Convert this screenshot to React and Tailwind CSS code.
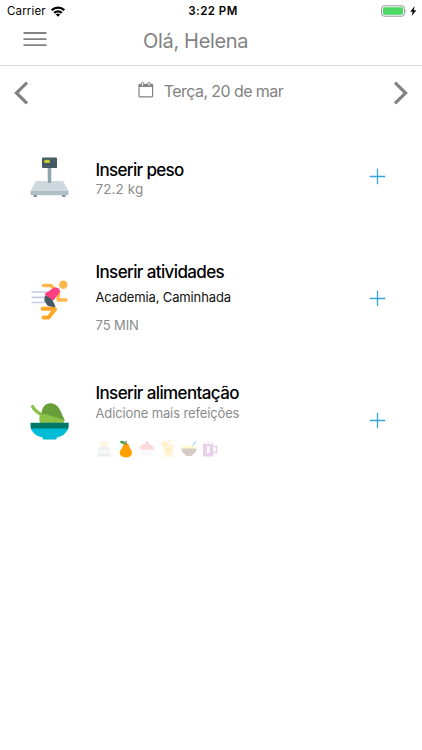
import React from "react";

function StatusBar() {
  return (
    <div className="flex h-[22px] items-center text-black">
      <div className="flex flex-1 items-center pl-[7px]">
        <span className="text-[11.5px] leading-[22px] tracking-[0.15px]">Carrier</span>
        <svg className="ml-[5px] h-[11px] w-[14px]" viewBox="0 0 14 11" fill="none" stroke="#000" strokeWidth="2.3">
          <path d="M0.8 4.2a8.8 8.8 0 0 1 12.4 0M3.2 6.9a5.4 5.4 0 0 1 7.6 0" />
          <path d="M7 10.8 4.8 8.6a3 3 0 0 1 4.4 0z" fill="#000" stroke="none" />
        </svg>
      </div>
      <span className="pl-[1px] text-[11.5px] font-semibold leading-[22px] tracking-[0.45px]">3:22 PM</span>
      <div className="flex flex-1 items-center justify-end pr-[4px]">
        <svg className="h-[12px] w-[38px]" viewBox="0 0 38 12">
          <rect x="1.5" y="0.8" width="23" height="10.4" rx="2.5" fill="#fff" stroke="#999" />
          <rect x="3" y="2.3" width="20" height="7.4" rx="1" fill="#4cd964" />
          <path d="M25.7 4.3q1.5 1.7 0 3.4z" fill="#999" />
          <path d="M34.7 1 30.2 6.8h2.5l-1 4.2 4.6-5.800h-2.6z" fill="#000" />
        </svg>
      </div>
    </div>
  );
}

function Header() {
  return (
    <header className="flex h-[44px] border-b border-[#d9d9d9]">
      <div className="flex w-[143px] pl-[23px] pt-[9px]">
        <svg className="h-[16px] w-[24px]" viewBox="0 0 24 16" stroke="#828282" strokeWidth="1.8">
          <path d="M0.5 2h23M0.5 8.2h23M0.5 14.2h23" />
        </svg>
      </div>
      <h1 className="pt-[7px] text-[20px] leading-[24px] tracking-[-0.33px] text-[#828282]">Olá, Helena</h1>
    </header>
  );
}

function DateBar() {
  return (
    <div className="flex h-[54px] items-center justify-between px-[14px]">
      <svg className="mb-[1px] h-[24px] w-[15px]" viewBox="0 0 15 24" fill="none" stroke="#828282" strokeWidth="3.2">
        <path d="M13 1.6 2.4 12 13 22.4" />
      </svg>
      <div className="mb-[4px] flex items-center pr-[1px]">
        <svg className="mb-[4px] h-[17px] w-[16px]" viewBox="0 0 16 17" fill="none" stroke="#828282">
          <rect x="1" y="3.4" width="13.6" height="12.4" rx="0.8" strokeWidth="1.2" />
          <path d="M1 4.8h13.6" strokeWidth="2.4" />
          <rect x="3.4" y="1.3" width="2.1" height="4" rx="1" fill="#fff" />
          <rect x="10" y="1.3" width="2.1" height="4" rx="1" fill="#fff" />
        </svg>
        <span className="ml-[10px] text-[16px] leading-[20px] tracking-[-0.58px] text-[#828282]">Terça, 20 de mar</span>
      </div>
      <svg className="mb-[1px] h-[24px] w-[15px]" viewBox="0 0 15 24" fill="none" stroke="#828282" strokeWidth="3.2">
        <path d="M2 1.6 12.6 12 2 22.4" />
      </svg>
    </div>
  );
}

function ScaleIcon() {
  return (
    <svg className="mt-[1px] h-[40px] w-[40px]" viewBox="0 0 40 40">
      <path d="M17.7 11h3.6v15h-3.6z" fill="#90a4ae" />
      <rect x="12" y="0.5" width="15" height="10.5" rx="0.8" fill="#455a64" />
      <path d="M14.3 2.8h5.5v3.2h-5.5z" fill="#c0ca33" />
      <path d="M3.5 37h3.500v3h-3.500zM32 37h3.500v3h-3.500z" fill="#78909c" />
      <path d="M6 24h11.700v2h3.600v-2H33L38.5 34h-38z" fill="#cfd8dc" />
      <path d="M.5 34h38v3.2q0 1-1 1h-36q-1 0-1-1z" fill="#b0bec5" />
    </svg>
  );
}

function RunnerIcon() {
  return (
    <svg className="mt-[4px] h-[40px] w-[40px]" viewBox="0 0 40 40" fill="none" strokeLinecap="round" strokeLinejoin="round">
      <path d="M1.5 12h17M1.5 17.3h14M1.5 22.5h14" stroke="#c5cae9" strokeWidth="1.7" strokeLinecap="butt" />
      <circle cx="33.3" cy="4.7" r="4.3" fill="#ffb74d" />
      <path d="m24.5 9-3.500-3.500h-7.500M28.500 12l-.5 8h8" stroke="#ffb74d" strokeWidth="3.4" />
      <path d="M24.500 28.700H12.500M25 29.300l-6.500 8.200h-5" stroke="#ffa726" strokeWidth="4" />
      <path d="m16 14 8.500-5.500q4.500-.8 4.500 3.500l-5.500 7-3 .5z" fill="#ff4081" stroke="#ff4081" strokeWidth="2" />
      <path d="m15.800 16.500 5.500 3.500 3 6.200-6-1.200-3-4.500z" fill="#455a64" stroke="#455a64" strokeWidth="2" />
    </svg>
  );
}

function SaladIcon() {
  return (
    <svg className="mt-[1px] h-[38px] w-[40px]" viewBox="0 0 40 38">
      <path d="M2.5 4.5q2.5 5 10.5 9" fill="none" stroke="#8bc34a" strokeWidth="3.2" strokeLinecap="round" />
      <path d="M11.8 16c-1-7 1-11.500 4-13.500C22-.5 28 2.500 31 10q1.500 4 3.500 7.500q0 2.500-2 4z" fill="#689f38" />
      <path d="M10.500 22q-3-6.500.5-9.500l4-.5 19.500 6q-.5 2.500-3 4z" fill="#8bc34a" />
      <path d="M.5 20.8h38.2v2.6q0 2.600-1 4.400H1.5q-1-1.8-1-4.4z" fill="#00796b" />
      <path d="M1.2 26.5H38c-1.8 5.3-6.5 8.3-11.3 8.9v1.3q0 .8-1 .8h-12q-1 0-1-.8v-1.3C7.7 34.8 3 32.1 1.2 26.5z" fill="#00bcd4" />
    </svg>
  );
}

function Plus() {
  return (
    <svg className="h-[17px] w-[17px]" viewBox="0 0 17 17" stroke="#35a5dc" strokeWidth="1.3">
      <path d="M8.5 .8v15.4M.8 8.5h15.4" />
    </svg>
  );
}

function MealIcons() {
  return (
    <div className="flex gap-[5px] pt-[18px]">
      <svg className="h-[18px] w-[16px] opacity-20" viewBox="0 0 16 18">
        <rect x="4" y="1" width="8.5" height="8" rx="2.5" fill="#ffcc80" />
        <path d="M2 9q0-2 2-2h8q2 0 2 2v6H2zM14 8.5h2v1.2h-2z" fill="#cfd8dc" />
        <path d="M4.5 7.5H12v1.2H4.5zM1 14.5h14v2H1z" fill="#90a4ae" />
      </svg>
      <svg className="ml-[1px] h-[18px] w-[16px]" viewBox="0 0 16 18">
        <path d="M7.6 3.4c3-.5 3.5 2 4 4 .5 1.5 2.4 2.7 2.4 5.4 0 3-2.7 4.7-6 4.7s-6.300-1.700-6.300-4.900c0-2.400 2.300-3.600 2.800-5.400.5-2 .9-3.500 3.100-3.800z" fill="#ffa000" />
        <path d="M7.7 5Q8.5 2.5 8 .8" fill="none" stroke="#6d4c41" />
        <path d="M8 3.8Q3.6 5 1.5 1.5 6-.7 8 3.8" fill="#43a047" />
      </svg>
      <svg className="h-[18px] w-[16px] opacity-20" viewBox="0 0 16 18">
        <path d="M2 8h12l-1.5 7.500q-4.500 1.500-9 0z" fill="#e0e5ec" />
        <path d="M.5 8.500C.5 5 4 4 6 4q6-1.500 9.500 4.500l-1 1.200H1.500z" fill="#ef5350" />
        <circle cx="8" cy="2.7" r="1.5" fill="#d32f2f" />
      </svg>
      <svg className="h-[18px] w-[16px] opacity-30" viewBox="0 0 16 18">
        <path d="M3 4.500h11l-1.200 12.500H4.200z" fill="#ffe082" />
        <path d="M7.500 6 8.500 1l2.500-.5" fill="none" stroke="#ffca28" />
        <circle cx="4.5" cy="3.8" r="2.8" fill="#ffd54f" />
        <path d="M6 8h4v4H6z" fill="#ffca28" />
      </svg>
      <svg className="h-[18px] w-[16px] opacity-30" viewBox="0 0 16 18">
        <path d="m10 8 5.300-7" stroke="#2196f3" strokeWidth="1.3" />
        <ellipse cx="8" cy="8" rx="7.5" ry="2.5" fill="#ffee58" />
        <path d="M.3 8.500h15.400q-.3 4.500-4.500 6.500v1H4.800v-1Q.6 13 .3 8.500z" fill="#795548" />
      </svg>
      <svg className="h-[18px] w-[16px] opacity-25" viewBox="0 0 16 18">
        <path d="M11.5 6.500h3v6h-3" fill="none" stroke="#ab47bc" strokeWidth="1.5" />
        <path d="M1 4h10.500v12.500H1z" fill="#ab47bc" />
        <path d="M5 6h2.500v7H5z" fill="#fff" />
        <path d="M2.500 4q1-1 0-2.500M6 4q1-1 0-2.500M9.500 4q1-1 0-2.500" fill="none" stroke="#ce93d8" />
      </svg>
    </div>
  );
}

function EntryRow({ icon, children }) {
  return (
    <section className="flex h-[122px] items-center pl-[30px] pr-[36px]">
      <div className="flex w-[65.5px]">{icon}</div>
      <div className="h-[94px] flex-1 whitespace-nowrap">{children}</div>
      <Plus />
    </section>
  );
}

export default function App() {
  return (
    <main className="h-[750px] w-[422px] overflow-hidden bg-white font-['Inter','Liberation_Sans',sans-serif]">
      <StatusBar />
      <Header />
      <DateBar />
      <div className="-mt-[5px]">
        <EntryRow icon={<ScaleIcon />}>
          <div className="pt-[30px]">
            <h2 className="text-[17px] font-medium leading-[22px] tracking-[-0.66px] text-black">Inserir peso</h2>
            <p className="text-[13.5px] leading-[16px] tracking-[0.1px] text-[#8b8b8b]">72.2 kg</p>
          </div>
        </EntryRow>
        <EntryRow icon={<RunnerIcon />}>
          <div className="pt-[10px]">
            <h2 className="text-[17px] font-medium leading-[22px] tracking-[-0.62px] text-black">Inserir atividades</h2>
            <p className="mt-[6px] text-[13px] leading-[16px] tracking-[-0.13px] text-[#111]">Academia, Caminhada</p>
            <p className="mt-[12px] text-[13px] leading-[16px] tracking-[-0.1px] text-[#8b8b8b]">75 MIN</p>
          </div>
        </EntryRow>
        <EntryRow icon={<SaladIcon />}>
          <div className="pt-[9px]">
            <h2 className="text-[17px] font-medium leading-[22px] tracking-[-0.62px] text-black">Inserir alimentação</h2>
            <p className="text-[13px] leading-[18px] tracking-[-0.13px] text-[#8b8b8b]">Adicione mais refeições</p>
            <MealIcons />
          </div>
        </EntryRow>
      </div>
    </main>
  );
}
